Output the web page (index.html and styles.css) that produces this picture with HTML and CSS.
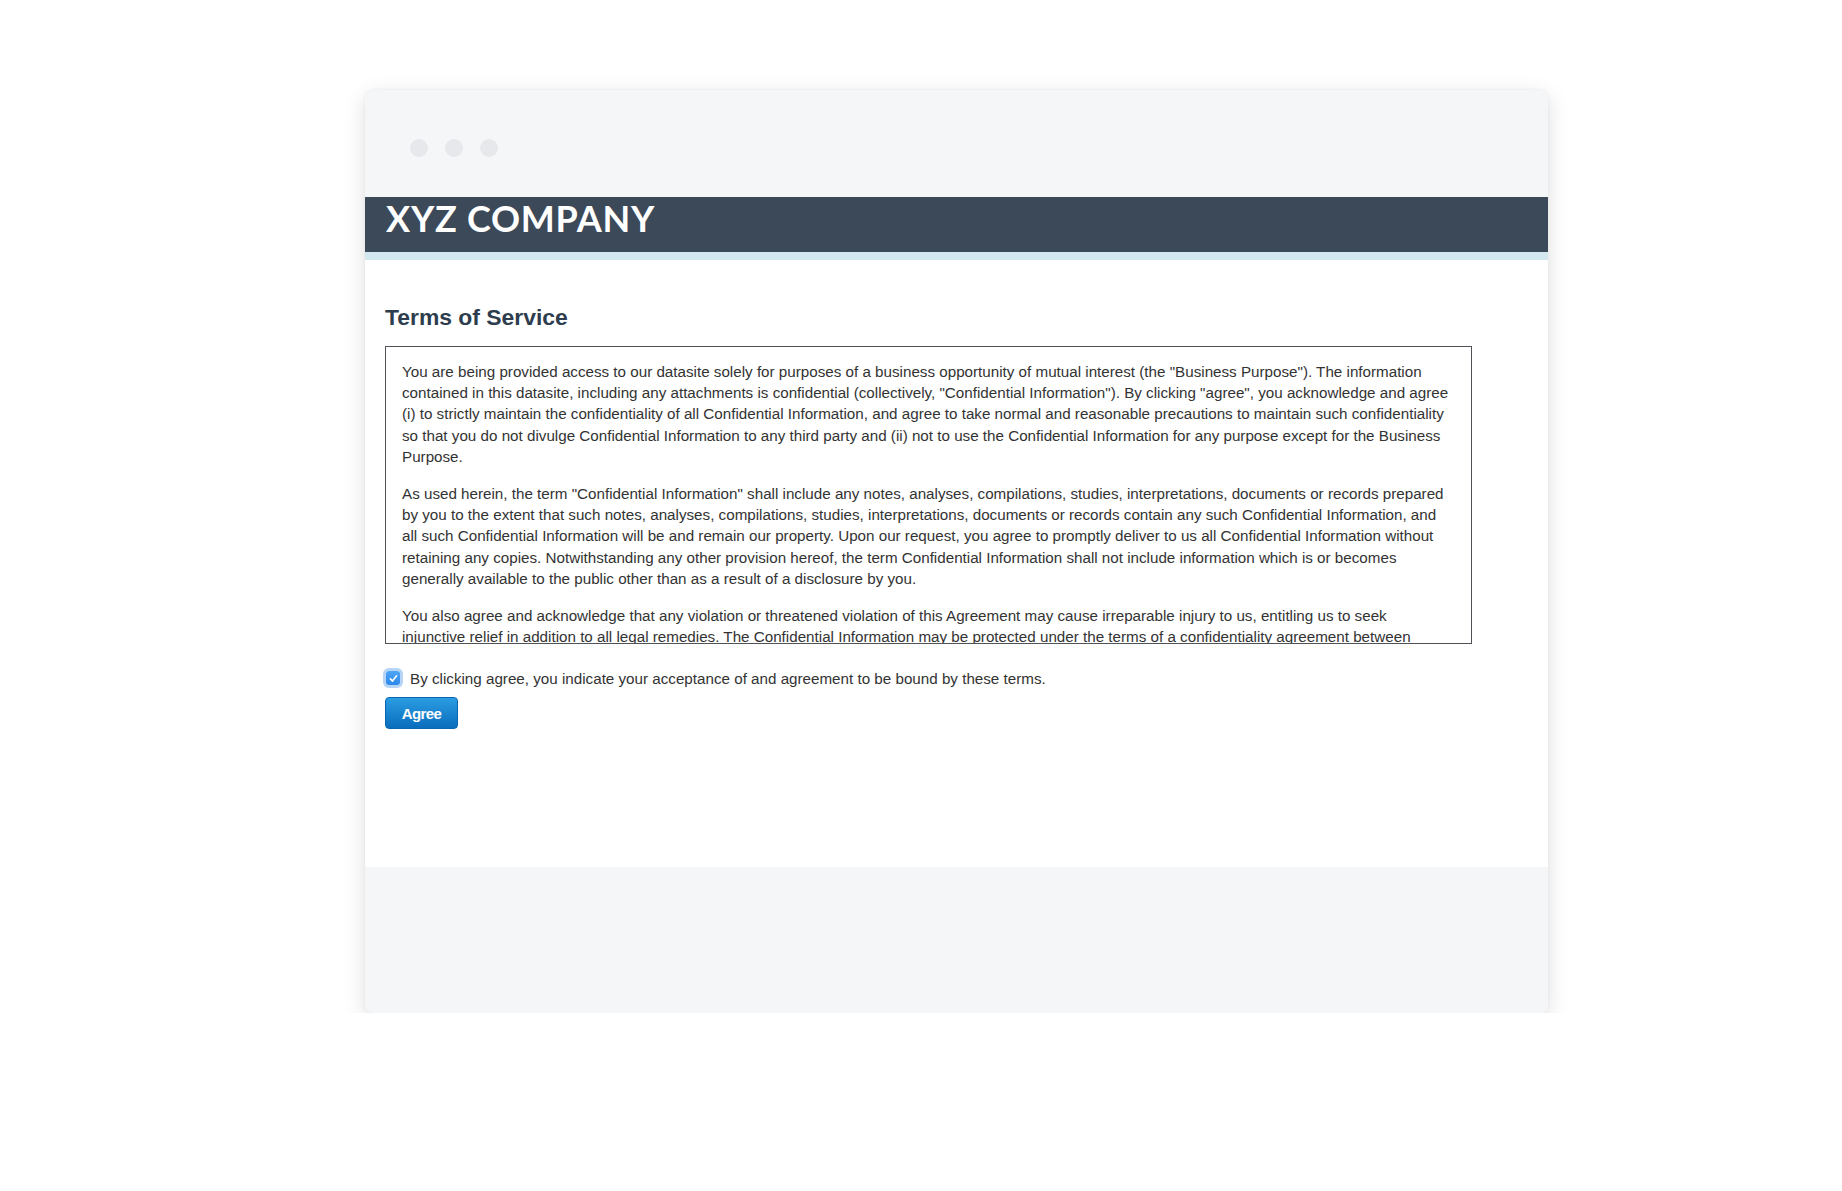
FILE: index.html
```html
<!DOCTYPE html>
<html lang="en">
<head>
<meta charset="utf-8">
<title>Terms of Service</title>
<link rel="stylesheet" href="styles.css">
</head>
<body>
<div class="window">
  <div class="topbar">
    <span class="dot"></span>
    <span class="dot"></span>
    <span class="dot"></span>
  </div>
  <div class="brandbar">
    <div class="brand">XYZ COMPANY</div>
  </div>
  <div class="stripe"></div>
  <main class="content">
    <h1 class="title">Terms of Service</h1>
    <div class="terms">
      <p>You are being provided access to our datasite solely for purposes of a business opportunity of mutual interest (the "Business Purpose"). The information contained in this datasite, including any attachments is confidential (collectively, "Confidential Information"). By clicking "agree", you acknowledge and agree (i) to strictly maintain the confidentiality of all Confidential Information, and agree to take normal and reasonable precautions to maintain such confidentiality so that you do not divulge Confidential Information to any third party and (ii) not to use the Confidential Information for any purpose except for the Business Purpose.</p>
      <p>As used herein, the term "Confidential Information" shall include any notes, analyses, compilations, studies, interpretations, documents or records prepared by you to the extent that such notes, analyses, compilations, studies, interpretations, documents or records contain any such Confidential Information, and all such Confidential Information will be and remain our property. Upon our request, you agree to promptly deliver to us all Confidential Information without retaining any copies. Notwithstanding any other provision hereof, the term Confidential Information shall not include information which is or becomes generally available to the public other than as a result of a disclosure by you.</p>
      <p>You also agree and acknowledge that any violation or threatened violation of this Agreement may cause irreparable injury to us, entitling us to seek injunctive relief in addition to all legal remedies. The Confidential Information may be protected under the terms of a confidentiality agreement between yourself and us, and nothing herein shall limit the terms of any such agreement.</p>
    </div>
    <label class="accept">
      <span class="check">
        <svg viewBox="0 0 13 13" width="13" height="13"><path d="M3.4 6.9 L5.5 9.1 L9.6 3.8" fill="none" stroke="#fff" stroke-width="1.6" stroke-linecap="round" stroke-linejoin="round"/></svg>
      </span>
      <span class="accept-text">By clicking agree, you indicate your acceptance of and agreement to be bound by these terms.</span>
    </label>
    <button class="agree" type="button">Agree</button>
  </main>
  <div class="footer"></div>
</div>
</body>
</html>
```

FILE: styles.css
```css
html, body {
  margin: 0;
  padding: 0;
  background: #ffffff;
}

body {
  font-family: "Liberation Sans", Arial, Helvetica, sans-serif;
  color: #333333;
}

.window {
  width: 1183px;
  margin: 90px 0 0 365px;
  background: #f5f6f8;
  border-radius: 8px;
  overflow: hidden;
  box-shadow: 0 6px 22px rgba(0, 0, 0, 0.13), 0 0 3px rgba(0, 0, 0, 0.06);
}

.topbar {
  height: 107px;
  box-sizing: border-box;
  padding: 49px 0 0 45px;
  display: flex;
  gap: 17px;
}

.dot {
  width: 18px;
  height: 18px;
  border-radius: 50%;
  background: #e7e8eb;
}

.brandbar {
  height: 55px;
  background: #3b4959;
  display: flex;
  align-items: center;
  padding-left: 21px;
}

.brand {
  font-family: Lato, "Noto Sans", sans-serif;
  font-weight: 700;
  font-size: 36px;
  line-height: 1;
  letter-spacing: 0.75px;
  color: #ffffff;
  margin-top: -13px;
}

.stripe {
  height: 8px;
  background: #d4e8f0;
}

.content {
  display: block;
  height: 607px;
  box-sizing: border-box;
  background: #ffffff;
  padding: 44px 20px 0;
}

.title {
  margin: 0;
  font-size: 22.9px;
  line-height: 26px;
  font-weight: 700;
  color: #2d3d4d;
}

.terms {
  margin-top: 16px;
  width: 1087px;
  height: 298px;
  box-sizing: border-box;
  border: 1px solid #4f5357;
  padding: 14px 21px 0 16px;
  overflow: hidden;
  font-size: 15.2px;
  line-height: 21.2px;
  color: #333333;
}

.terms p {
  margin: 0 0 16px;
}

.accept {
  margin-top: 24px;
  display: flex;
  align-items: center;
  height: 20px;
  font-size: 15.2px;
  color: #333333;
}

.check {
  width: 14px;
  height: 14px;
  margin-left: 1px;
  margin-right: 10px;
  border-radius: 3px;
  background: linear-gradient(#4ea6f6, #2a88ea);
  box-shadow: 0 0 0 3px rgba(94, 160, 236, 0.45);
  display: flex;
  align-items: center;
  justify-content: center;
}

.agree {
  display: block;
  margin-top: 9px;
  width: 73px;
  height: 32px;
  padding: 0;
  border: 1px solid #0a66b0;
  border-radius: 4px;
  background: linear-gradient(#2b9de2, #0a6dbd);
  color: #ffffff;
  font-family: "Liberation Sans", Arial, sans-serif;
  font-weight: 700;
  font-size: 15px;
  letter-spacing: -0.6px;
  cursor: pointer;
}

.footer {
  height: 146px;
  background: #f5f6f8;
}
```
